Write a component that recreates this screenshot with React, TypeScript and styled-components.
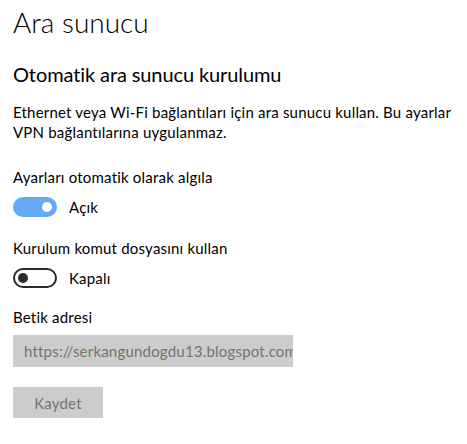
import React from "react";
import styled, { createGlobalStyle } from "styled-components";

const Global = createGlobalStyle`
    html, body {
        margin: 0;
        padding: 0;
        background: #ffffff;
    }
    body {
        font-family: Lato, "Open Sans", sans-serif;
        color: #000000;
    }
`

const Page = styled.div`
    padding: 2px 13px 0 13px;
    width: 467px;
    box-sizing: border-box;
    font-size: 15px;
    line-height: 20px;
    letter-spacing: 0.2px;
`
const Title = styled.h1`
    margin: 0;
    font-size: 28px;
    line-height: 40px;
    font-weight: 300;
    letter-spacing: 0;
`
const Subtitle = styled.h2`
    margin: 18px 0 0 0;
    font-size: 20px;
    line-height: 28px;
    font-weight: 400;
    letter-spacing: -0.1px;
`
const Text = styled.p`
    margin: 14px 0 0 0;
    max-width: 450px;
`
const Label = styled.div<{ gap: number }>`
    margin-top: ${props => props.gap}px;
`
const ToggleRow = styled.div`
    display: flex;
    align-items: center;
    gap: 12px;
    margin-top: 10px;
`
const Track = styled.div<{ on: boolean }>`
    width: 44px;
    height: 20px;
    box-sizing: border-box;
    border-radius: 10px;
    display: flex;
    align-items: center;
    justify-content: ${props => props.on ? "flex-end" : "flex-start"};
    padding: 0 3px;
    background: ${props => props.on ? "#66aaf5" : "#ffffff"};
    border: 2px solid ${props => props.on ? "#66aaf5" : "#2b2b2b"};
`
const Thumb = styled.span<{ on: boolean }>`
    width: 10px;
    height: 10px;
    border-radius: 50%;
    background: ${props => props.on ? "#ffffff" : "#2b2b2b"};
`
const Input = styled.div`
    margin-top: 8px;
    width: 280px;
    height: 32px;
    box-sizing: border-box;
    background: #cccccc;
    color: #737373;
    line-height: 32px;
    padding: 0 10px 0 11px;
    white-space: nowrap;
    overflow: hidden;
`
const Button = styled.div`
    margin-top: 20px;
    width: 90px;
    height: 31px;
    background: #cccccc;
    color: #737373;
    display: flex;
    align-items: center;
    justify-content: center;
`

type ToggleProps = {
    on: boolean
    text: string
}

const Toggle = (props: ToggleProps) => {
    return (
        <ToggleRow>
            <Track on={props.on}><Thumb on={props.on} /></Track>
            <span>{props.text}</span>
        </ToggleRow>
    );
};

export default function App() {
    return (
        <Page>
            <Global />
            <Title>Ara sunucu</Title>
            <Subtitle>Otomatik ara sunucu kurulumu</Subtitle>
            <Text>Ethernet veya Wi-Fi bağlantıları için ara sunucu kullan. Bu ayarlar VPN bağlantılarına uygulanmaz.</Text>
            <Label gap={25}>Ayarları otomatik olarak algıla</Label>
            <Toggle on={true} text="Açık" />
            <Label gap={21}>Kurulum komut dosyasını kullan</Label>
            <Toggle on={false} text="Kapalı" />
            <Label gap={19}>Betik adresi</Label>
            <Input>https://serkangundogdu13.blogspot.com</Input>
            <Button>Kaydet</Button>
        </Page>
    );
}
